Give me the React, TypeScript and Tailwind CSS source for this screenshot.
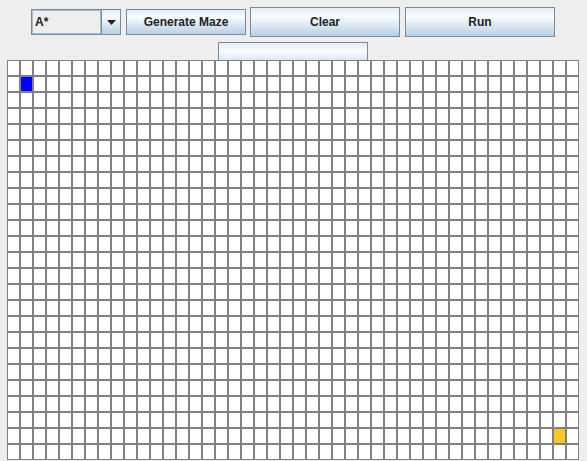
import React from "react";

const COLS = 44;
const ROWS = 25;
const START = { r: 1, c: 1 };
const END = { r: 23, c: 42 };

// Metal/Ocean style button
function SwingButton({ label, className = "" }: { label: string; className?: string }) {
  return (
    <div
      className={`flex items-center justify-center border border-[#7a8a99] bg-gradient-to-b from-[#e3ecf5] via-[#fafcfe] via-30% to-[#b8cfe5] text-[12px] font-bold text-[#222] ${className}`}
    >
      {label}
    </div>
  );
}

function ComboBox() {
  return (
    <div className="flex h-[26px] w-[90px] border border-[#7a8a99] bg-[#eeeeee]">
      <div className="flex flex-1 items-center border border-[#a3bed8] pl-[2px] text-[12px] font-bold text-[#222]">
        A*
      </div>
      <div className="flex w-[19px] items-center justify-center border-l border-[#7a8a99] bg-gradient-to-b from-[#e3ecf5] via-[#fafcfe] via-30% to-[#b8cfe5]">
        <svg width="9" height="5" viewBox="0 0 9 5">
          <polygon points="0,0 9,0 4.5,5" fill="#222" />
        </svg>
      </div>
    </div>
  );
}

function Cell({ r, c }: { r: number; c: number }) {
  let bg = "bg-white";
  if (r === START.r && c === START.c) bg = "bg-[#0000ff]";
  else if (r === END.r && c === END.c) bg = "bg-[#fac822]";
  return <div className={`h-[16px] w-[13px] border border-[#808080] ${bg}`} />;
}

export default function App() {
  const cells = [];
  for (let r = 0; r < ROWS; r++) {
    for (let c = 0; c < COLS; c++) {
      cells.push(<Cell key={`${r}-${c}`} r={r} c={c} />);
    }
  }

  return (
    <div
      className="h-[461px] w-[587px] overflow-hidden bg-[#eeeeee]"
      style={{ fontFamily: '"Liberation Sans", Arial, sans-serif' }}
    >
      {/* toolbar */}
      <div className="flex h-[30px] items-center pl-[31px] mt-[7px]">
        <ComboBox />
        <SwingButton label="Generate Maze" className="ml-[5px] h-[26px] w-[120px]" />
        <SwingButton label="Clear" className="ml-[4px] h-[30px] w-[150px]" />
        <SwingButton label="Run" className="ml-[5px] h-[30px] w-[150px]" />
      </div>

      {/* second row, clipped by the grid */}
      <div className="mt-[5px] h-[18px] overflow-hidden pl-[218px]">
        <SwingButton label="" className="h-[30px] w-[150px]" />
      </div>

      {/* maze grid */}
      <div className="ml-[7px] grid w-fit grid-cols-[repeat(44,13px)] grid-rows-[repeat(25,16px)]">
        {cells}
      </div>
    </div>
  );
}
